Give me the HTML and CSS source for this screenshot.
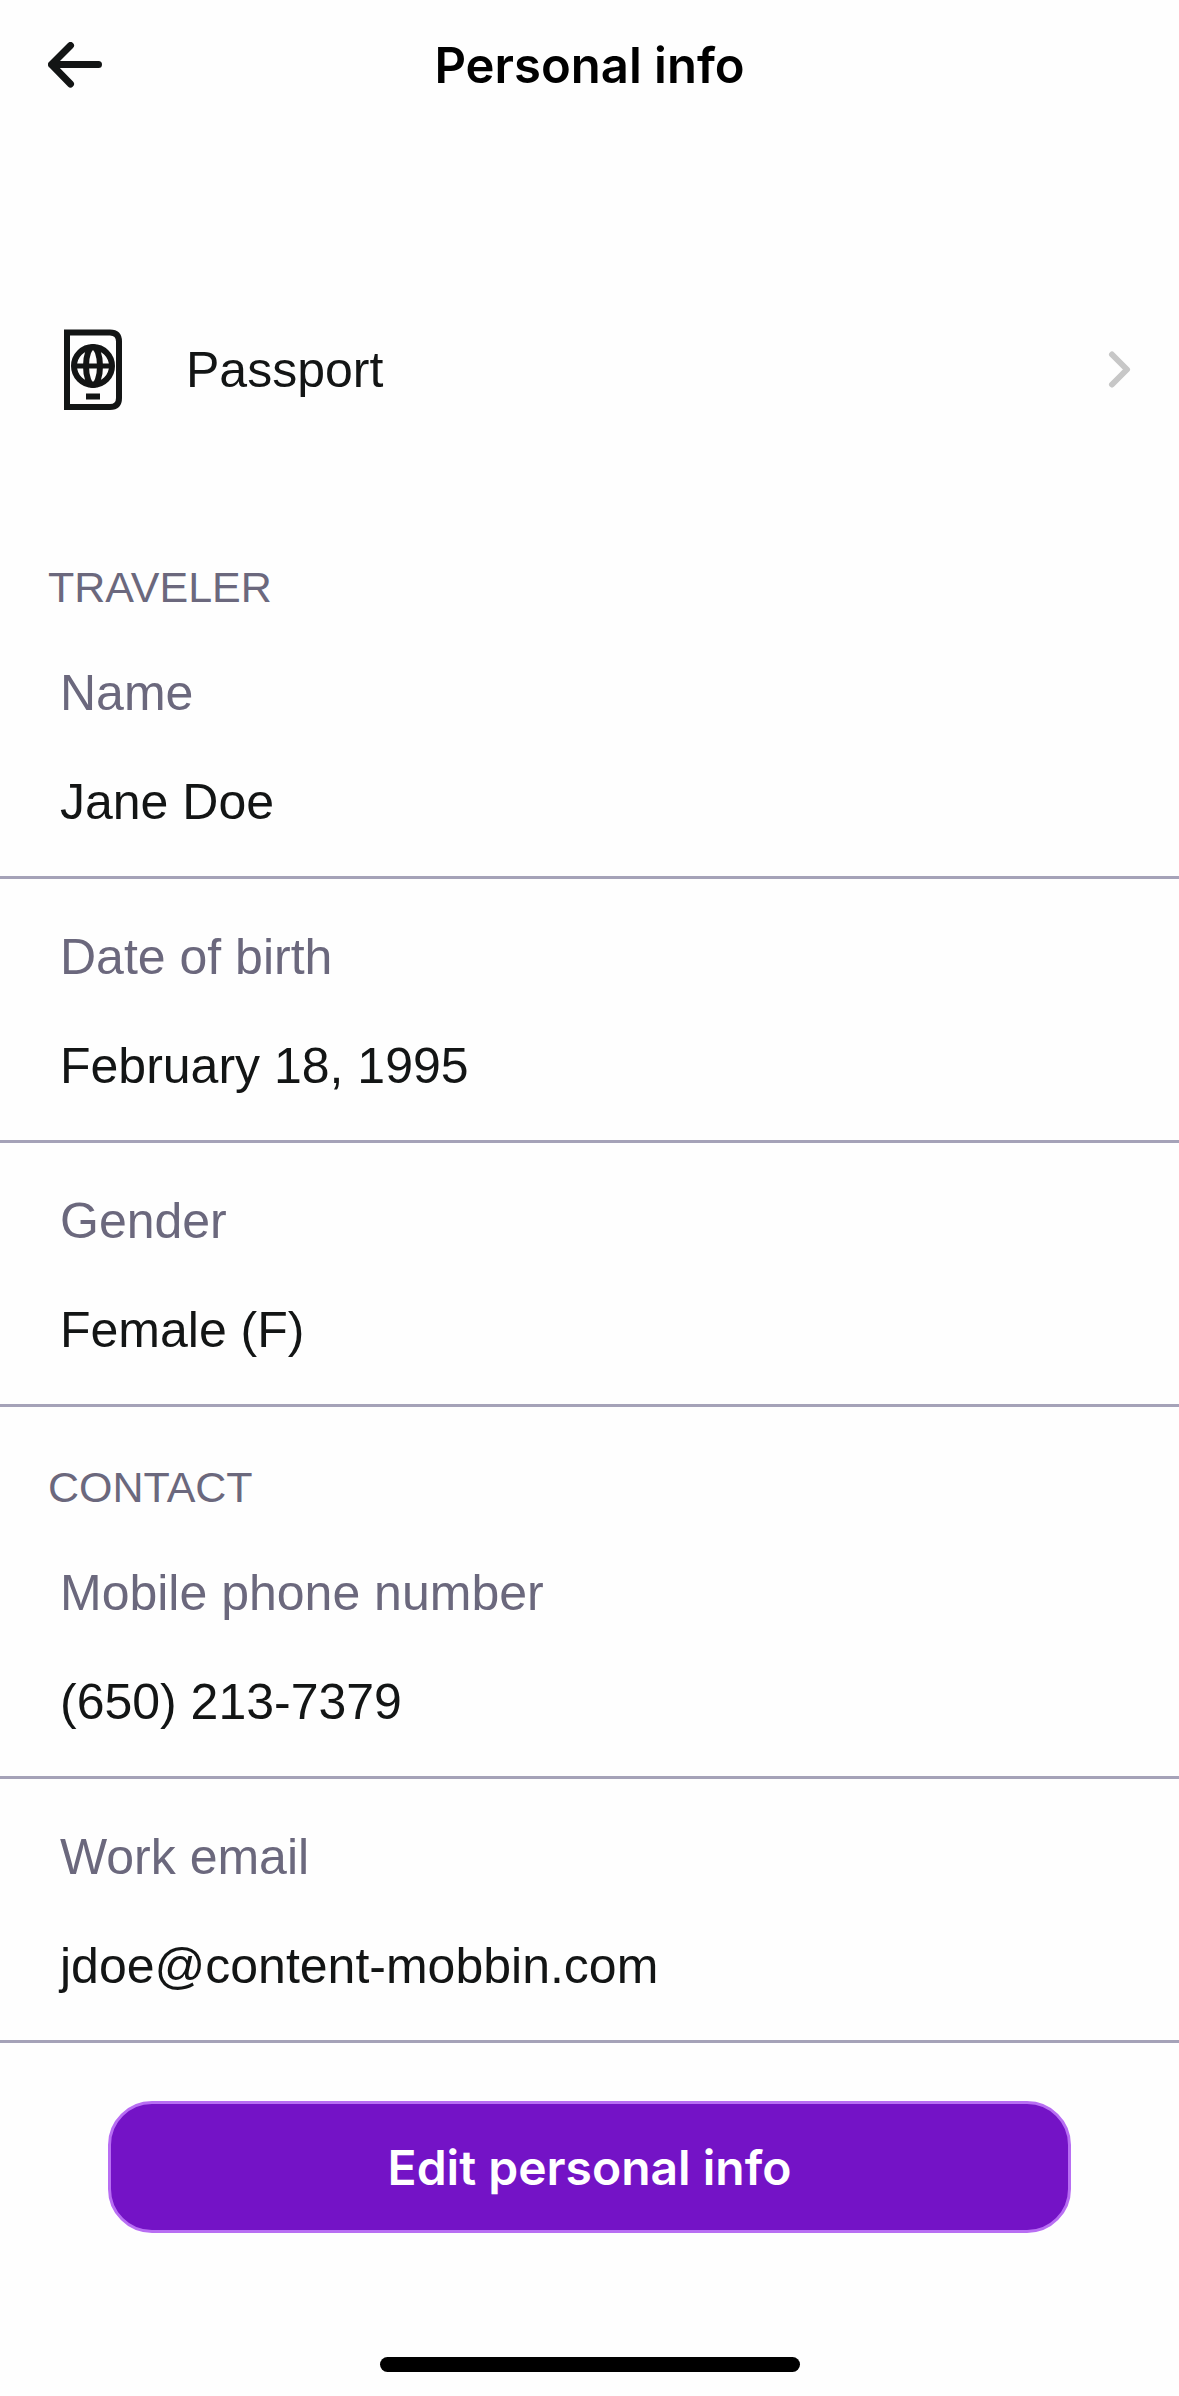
FILE: index.html
```html
<!DOCTYPE html>
<html lang="en">
<head>
    <meta charset="utf-8">
    <meta name="viewport" content="width=device-width, initial-scale=1">
    <title>Personal info</title>
    <link rel="stylesheet" href="styles.css">
</head>
<body>
    <header class="top-bar">
        <button class="back" type="button" aria-label="Back">
            <svg width="54" height="48" viewBox="0 0 54 48" fill="none" stroke="#131515" stroke-width="7" stroke-linecap="round" stroke-linejoin="round">
                <path d="M3.5 22.5H50.5M22.5 3.5L3.5 22.5L22.5 42"/>
            </svg>
        </button>
        <h1 class="title">Personal info</h1>
    </header>

    <main>
        <a class="passport" href="#passport">
            <svg width="58" height="82" viewBox="0 0 58 82" fill="none" stroke="#131515">
                <path d="M3 3.5H46Q55 3.5 55 12.5V69Q55 78 46 78H3Z" stroke-width="6"/>
                <circle cx="29" cy="37" r="19" stroke-width="6"/>
                <ellipse cx="29" cy="37" rx="7" ry="19" stroke-width="6"/>
                <path d="M10 37H48" stroke-width="5"/>
                <path d="M22 67.5H36" stroke-width="6"/>
            </svg>
            <span class="passport-label">Passport</span>
            <svg width="24" height="38" viewBox="0 0 24 38" fill="none" stroke="#c7c7c7" stroke-width="6" stroke-linecap="round" stroke-linejoin="round">
                <path d="M5 3.5L20 18.5L5 33.5"/>
            </svg>
        </a>

        <section>
            <h2 class="section-title">TRAVELER</h2>
            <dl class="fields">
                <div class="field">
                    <dt>Name</dt>
                    <dd>Jane Doe</dd>
                </div>
                <div class="field">
                    <dt>Date of birth</dt>
                    <dd>February 18, 1995</dd>
                </div>
                <div class="field">
                    <dt>Gender</dt>
                    <dd>Female (F)</dd>
                </div>
            </dl>
        </section>

        <section>
            <h2 class="section-title">CONTACT</h2>
            <dl class="fields">
                <div class="field">
                    <dt>Mobile phone number</dt>
                    <dd>(650) 213-7379</dd>
                </div>
                <div class="field">
                    <dt>Work email</dt>
                    <dd>jdoe@content-mobbin.com</dd>
                </div>
            </dl>
        </section>

        <div class="actions">
            <button class="edit" type="button">Edit personal info</button>
        </div>
    </main>

    <div class="home-indicator"></div>
</body>
</html>
```

FILE: styles.css
```css
* {
    box-sizing: border-box;
}

body {
    margin: 0;
    min-height: 100vh;
    display: flex;
    flex-direction: column;
    background: #fefefe;
    color: #131515;
    font-family: "Liberation Sans", Arial, sans-serif;
    font-size: 50px;
    line-height: 60px;
}

h1, h2, dl, dd {
    margin: 0;
}

svg {
    display: block;
    flex: none;
}

/* top bar */
.top-bar {
    display: grid;
    grid-template-columns: 1fr auto 1fr;
    align-items: center;
    padding: 36px 48px;
}

.back {
    justify-self: start;
    padding: 0;
    border: 0;
    background: none;
    cursor: pointer;
}

.title {
    font-family: Inter, sans-serif;
    font-size: 49px;
    font-weight: 600;
    color: #000;
}

/* passport link */
.passport {
    display: flex;
    align-items: center;
    gap: 64px;
    margin-top: 149px;
    padding: 48px 48px 48px 64px;
    color: inherit;
    text-decoration: none;
}

.passport-label {
    flex: 1;
}

/* sections */
.section-title {
    padding: 54px 48px 2px;
    font-size: 43px;
    font-weight: 400;
    line-height: 52px;
    color: #6b687d;
}

.passport + section {
    margin-top: 48px;
}

.field {
    display: flex;
    flex-direction: column;
    gap: 49px;
    padding: 48px 60px 44px;
    border-bottom: 3px solid #a5a2b8;
}

.field dt {
    color: #6b687d;
}

/* button */
.actions {
    padding: 58px 108px;
}

.edit {
    display: block;
    width: 100%;
    height: 132px;
    border: 3px solid #b86ef3;
    border-radius: 44px;
    background: #7413c6;
    color: #fff;
    font-family: Inter, sans-serif;
    font-size: 48px;
    font-weight: 600;
    cursor: pointer;
}

.home-indicator {
    width: 420px;
    height: 15px;
    margin: auto auto 24px;
    border-radius: 8px;
    background: #000;
}
```
